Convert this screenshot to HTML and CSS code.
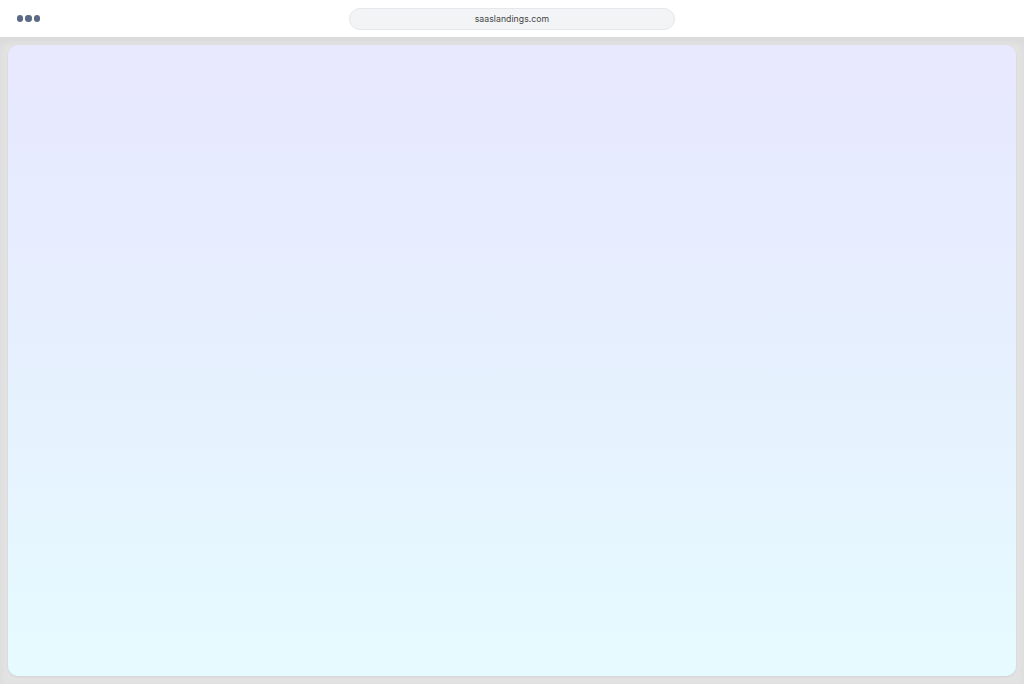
FILE: index.html
```html
<!DOCTYPE html>
<html lang="en">
<head>
<meta charset="utf-8">
<title>saaslandings.com</title>
<link rel="stylesheet" href="styles.css">
</head>
<body>
<div class="browser">
  <header class="chrome">
    <div class="dots"><span></span><span></span><span></span></div>
    <div class="url">saaslandings.com</div>
  </header>
  <main class="viewport">
    <div class="page"></div>
  </main>
</div>
</body>
</html>
```
FILE: styles.css
```css
html, body {
  margin: 0;
  padding: 0;
  width: 1024px;
  height: 684px;
  overflow: hidden;
  font-family: Inter, "Noto Sans", "Liberation Sans", sans-serif;
}
.browser {
  display: flex;
  flex-direction: column;
  height: 684px;
}
.chrome {
  height: 37px;
  flex: none;
  background: #ffffff;
  display: grid;
  grid-template-columns: 1fr 326px 1fr;
  align-items: center;
  padding: 0 17px;
  box-sizing: border-box;
}
.dots {
  display: flex;
  gap: 2px;
  align-items: center;
}
.dots span {
  width: 6.3px;
  height: 6.3px;
  border-radius: 50%;
  background: #5b6b86;
}
.url {
  height: 22px;
  border-radius: 11px;
  background: #f3f4f6;
  border: 1px solid #e6e7ea;
  box-sizing: border-box;
  display: flex;
  align-items: center;
  justify-content: center;
  font-size: 8.7px;
  color: #444444;
  letter-spacing: 0.05px;
}
.viewport {
  flex: 1;
  background: #e3e3e3;
  box-shadow: inset 0 4px 8px rgba(0,0,0,0.05);
  padding: 8px;
  box-sizing: border-box;
  display: flex;
}
.page {
  flex: 1;
  border-radius: 10px;
  background: linear-gradient(180deg, #e8e8fe 0%, #e6f0fe 50%, #e6fbff 100%);
  box-shadow: 0 1px 3px rgba(0,0,0,0.08);
}
```
